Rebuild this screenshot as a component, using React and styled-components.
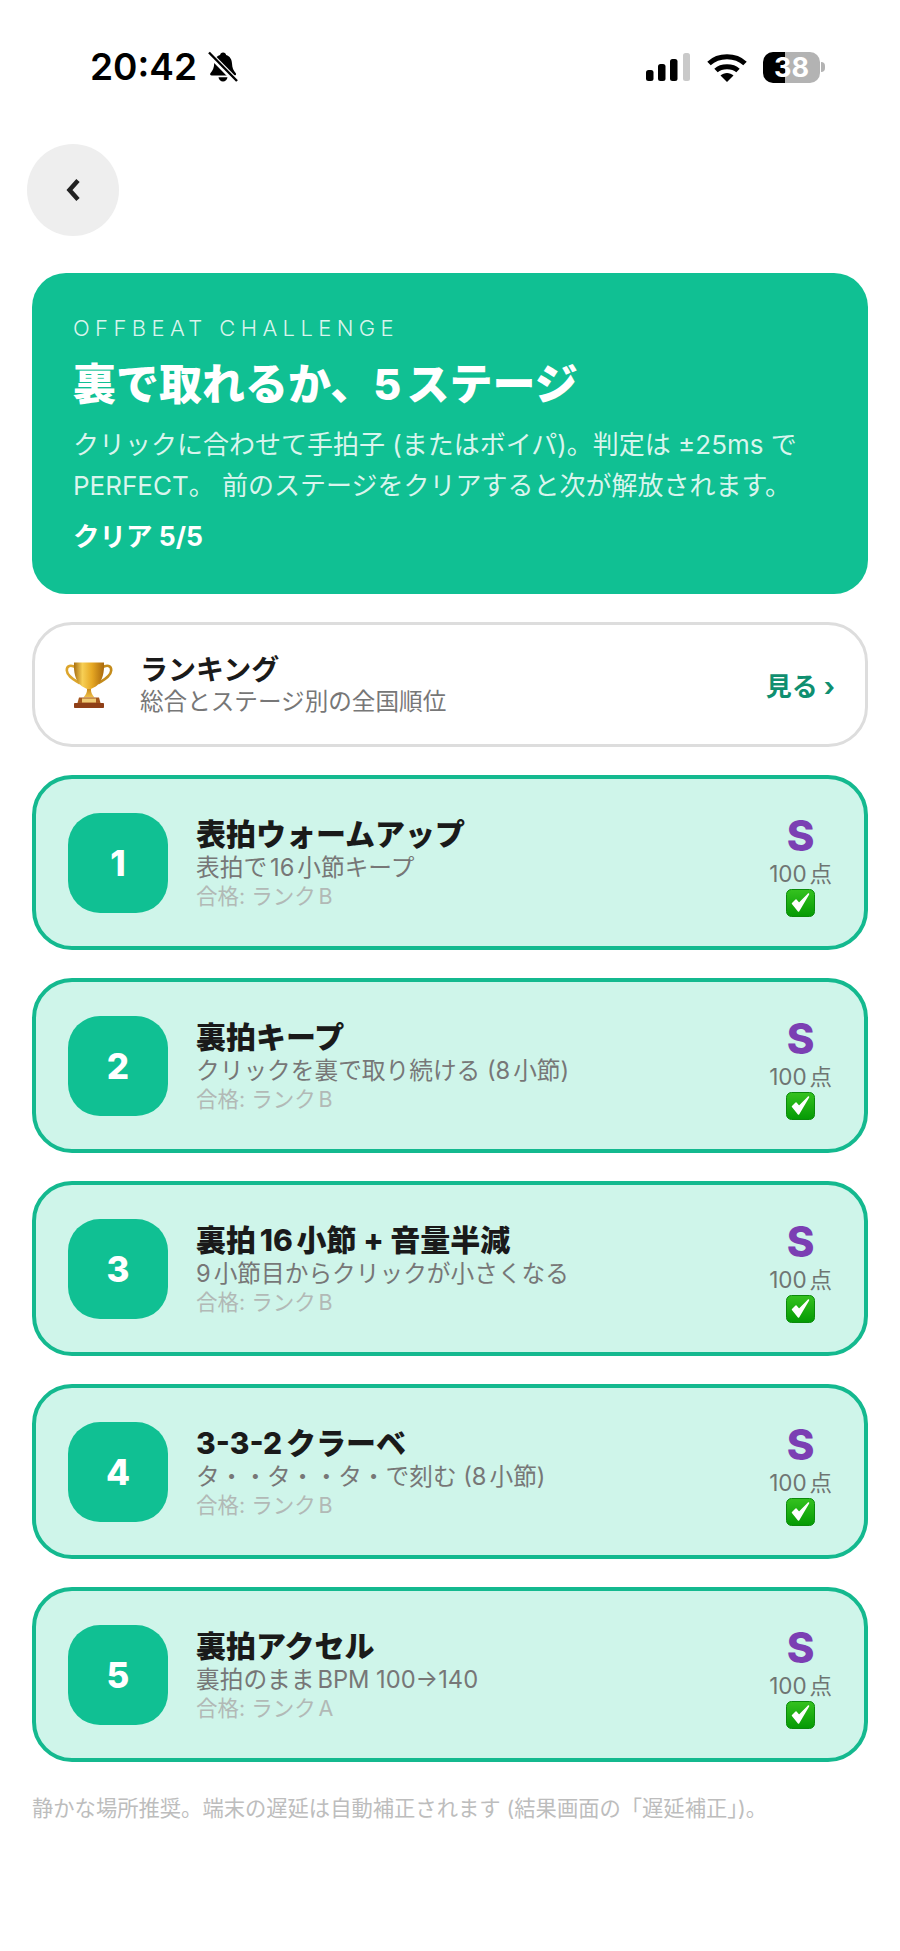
import React from 'react';
import styled, { createGlobalStyle } from 'styled-components';

const GlobalStyle = createGlobalStyle`
    html, body {
        margin: 0;
        padding: 0;
        background: #ffffff;
    }
    body {
        font-family: 'Inter', 'Noto Sans CJK JP', sans-serif;
        text-autospace: normal;
    }
`;

const Page = styled.div`
    width: 900px;
    min-height: 1951px;
    box-sizing: border-box;
    padding: 0 32px;
    display: flex;
    flex-direction: column;
    background: #ffffff;
`;

const StatusBar = styled.div`
    height: 144px;
    margin: 0 -32px;
    padding: 49px 75px 0 90px;
    box-sizing: border-box;
    display: flex;
    justify-content: space-between;
    align-items: flex-start;
`;
const TimeGroup = styled.div`
    display: flex;
    align-items: center;
    gap: 11px;
    height: 36px;
`;
const Time = styled.span`
    font-size: 37px;
    font-weight: 600;
    line-height: 36px;
    color: #000000;
`;
const StatusIcons = styled.div`
    display: flex;
    align-items: center;
    gap: 16.5px;
    height: 36px;
`;
const BatteryWrap = styled.div`
    display: flex;
    align-items: center;
    gap: 1px;
`;
const Battery = styled.div`
    width: 57px;
    height: 31px;
    border-radius: 10px;
    overflow: hidden;
    display: flex;
    align-items: center;
    justify-content: center;
    background: linear-gradient(to right, #000000 0 38%, #b3b3b3 38% 100%);
    color: #ffffff;
    font-size: 27px;
    font-weight: 700;
    line-height: 31px;
`;
const BatteryNub = styled.div`
    width: 4px;
    height: 10px;
    border-radius: 0 4px 4px 0;
    background: #b3b3b3;
`;

const BackButton = styled.button`
    width: 92px;
    height: 92px;
    margin-left: -5px;
    padding: 0;
    border: none;
    border-radius: 50%;
    background: #eeeeee;
    display: flex;
    align-items: center;
    justify-content: center;
`;

const Hero = styled.section`
    margin-top: 37px;
    height: 321px;
    box-sizing: border-box;
    padding: 41px 41px 0;
    border-radius: 34px;
    background: #10c093;
    color: #ffffff;
`;
const Eyebrow = styled.div`
    font-size: 22px;
    font-weight: 300;
    letter-spacing: 5.4px;
    line-height: 28px;
    color: rgba(255, 255, 255, 0.85);
`;
const HeroTitle = styled.h1`
    margin: 14px 0 0;
    font-size: 43px;
    font-weight: 800;
    line-height: 56px;
`;
const HeroText = styled.p`
    margin: 12px 0 0;
    font-size: 26px;
    font-weight: 400;
    line-height: 41px;
    color: rgba(255, 255, 255, 0.85);
`;
const HeroCount = styled.div`
    margin-top: 10px;
    font-size: 26.5px;
    font-weight: 700;
    line-height: 40px;
`;

const RankingCard = styled.a`
    margin-top: 28px;
    height: 125px;
    box-sizing: border-box;
    padding: 0 30px 0 30px;
    border: 3px solid #dddddd;
    border-radius: 40px;
    background: #ffffff;
    display: flex;
    align-items: center;
    gap: 27px;
`;
const RankingBody = styled.div`
    flex: 1;
    display: flex;
    flex-direction: column;
`;
const RankingTitle = styled.div`
    font-size: 28px;
    font-weight: 700;
    line-height: 34px;
    color: #1a1a1a;
`;
const RankingSub = styled.div`
    font-size: 23.6px;
    line-height: 30px;
    color: #777777;
`;
const RankingLink = styled.div`
    font-size: 26px;
    font-weight: 700;
    color: #0f8f70;
`;

const StageList = styled.div`
    margin-top: 28px;
    display: flex;
    flex-direction: column;
    gap: 28px;
`;
const StageCard = styled.article`
    height: 175px;
    box-sizing: border-box;
    padding: 0 32px;
    border: 4px solid #14b98f;
    border-radius: 40px;
    background: #cff5ea;
    display: flex;
    align-items: center;
    gap: 29px;
`;
const StageBadge = styled.div`
    flex: none;
    width: 100px;
    height: 100px;
    border-radius: 32px;
    background: #10c093;
    color: #ffffff;
    font-size: 35px;
    font-weight: 800;
    display: flex;
    align-items: center;
    justify-content: center;
`;
const StageBody = styled.div`
    flex: 1;
    display: flex;
    flex-direction: column;
    margin-left: -1px;
`;
const StageTitle = styled.div`
    font-size: 30px;
    font-weight: 800;
    line-height: 37px;
    color: #1a1a1a;
`;
const StageSub = styled.div`
    font-size: 23.7px;
    line-height: 30px;
    color: #777777;
`;
const StageNeed = styled.div`
    font-size: 21.5px;
    line-height: 27px;
    color: #b2b9b6;
`;
const StageScore = styled.div`
    flex: none;
    display: flex;
    flex-direction: column;
    align-items: center;
`;
const Rank = styled.div`
    font-size: 42px;
    font-weight: 800;
    line-height: 46px;
    margin-top: 4px;
    color: #7b3fb3;
`;
const Points = styled.div`
    font-size: 22.5px;
    line-height: 30px;
    color: #6f7573;
`;

const Footnote = styled.p`
    margin: 31px 0 0;
    font-size: 21.3px;
    line-height: 30px;
    color: #bdbdbd;
    white-space: nowrap;
`;

const BellSlash = () => (
    <svg width="30" height="32" viewBox="0 0 30 32">
        <path
            d="M15 1.5c-1.6 0-2.7 1.1-2.9 2.6C8.3 5.2 6.4 8.6 6.2 12.5c-.2 4.4-1.4 7-3.6 9.4-1 1.1-.4 2.6 1.2 2.6h22.6c1.6 0 2.2-1.5 1.2-2.6-2.2-2.4-3.4-5-3.6-9.4-.2-3.9-2.1-7.3-5.9-8.4-.2-1.5-1.3-2.6-2.9-2.6z"
            fill="#000"
        />
        <path d="M10.5 26.2h9c-.3 2.4-2.2 4.2-4.5 4.2s-4.2-1.8-4.5-4.2z" fill="#000" />
        <path d="M1.5 3 28 30" stroke="#fff" strokeWidth="6" />
        <path d="M1 1.5l28 28.5" stroke="#000" strokeWidth="2.4" />
    </svg>
);

const Signal = () => (
    <svg width="44" height="28" viewBox="0 0 44 28">
        <rect x="0" y="17" width="7.5" height="11" rx="2.5" fill="#000" />
        <rect x="12" y="11" width="7.5" height="17" rx="2.5" fill="#000" />
        <rect x="24" y="6" width="7.5" height="22" rx="2.5" fill="#000" />
        <rect x="37" y="0" width="7" height="28" rx="2.5" fill="#c9c9c9" />
    </svg>
);

const Wifi = () => (
    <svg width="40" height="30" viewBox="0 0 40 30">
        <path d="M2 11.5C11.5 2.5 28.500 2.5 38 11.500" fill="none" stroke="#000" strokeWidth="5" />
        <path d="M9 18.500C14.500 13.500 25.500 13.500 31 18.500" fill="none" stroke="#000" strokeWidth="5" />
        <path d="M13.500 23.500C17 20 23 20 26.500 23.500L20 30z" fill="#000" />
    </svg>
);

const Chevron = () => (
    <svg width="16" height="22" viewBox="0 0 16 22">
        <path d="M13 1.500 4.500 11l8.500 9.500" fill="none" stroke="#222" strokeWidth="4.500" />
    </svg>
);

const Trophy = () => (
    <svg width="48" height="48" viewBox="0 0 48 48" style={{ flex: 'none' }}>
        <defs>
            <linearGradient id="cupGold" x1="0" x2="1" y1="0" y2="0">
                <stop offset="0" stopColor="#a86f12" />
                <stop offset="0.28" stopColor="#f7cf55" />
                <stop offset="0.6" stopColor="#e6a823" />
                <stop offset="1" stopColor="#a9680d" />
            </linearGradient>
            <linearGradient id="standGold" x1="0" x2="0" y1="0" y2="1">
                <stop offset="0" stopColor="#c98a1a" />
                <stop offset="1" stopColor="#f0c24c" />
            </linearGradient>
        </defs>
        <path d="M11 6.500C6 3.500 1.500 4.500 1.800 9.500c.3 6 8 9.500 13.200 13" fill="none" stroke="#dca52c" strokeWidth="2.600" />
        <path d="M37 6.500c5-3 9.500-2 9.200 3-.3 6-8 9.500-13.200 13" fill="none" stroke="#c48c1c" strokeWidth="2.600" />
        <path d="M9 1.500h30c.5 10-1.500 18-6.500 22.500-3 2.700-6 3-6.800 4.500h-3.400c-.8-1.500-3.800-1.800-6.800-4.500C10.500 19.500 8.500 11.500 9 1.500z" fill="url(#cupGold)" />
        <path d="M22 28h4c-.2 3 .8 5.500 3.500 8.500h-11C21.200 33.500 22.200 31 22 28z" fill="url(#standGold)" />
        <path d="M14 36.500h20l1.500 5.500h-23z" fill="#a5561c" />
        <rect x="9" y="42" width="30" height="5" rx="0.8" fill="#8f3f17" />
        <rect x="17" y="37.500" width="14" height="4" fill="#efcb74" />
    </svg>
);

const CheckMark = () => (
    <svg width="29" height="28" viewBox="0 0 29 28">
        <defs>
            <linearGradient id="checkGreen" x1="0" x2="0" y1="0" y2="1">
                <stop offset="0" stopColor="#35c21f" />
                <stop offset="1" stopColor="#049a04" />
            </linearGradient>
        </defs>
        <rect x="0.500" y="0.500" width="28" height="27" rx="5" fill="url(#checkGreen)" stroke="#0b8a0b" />
        <path d="M6.500 14.500l6 7.500 10-17-9.500 9.500-3-3.500z" fill="#fff" stroke="#fff" strokeWidth="1.500" strokeLinejoin="round" />
    </svg>
);

const stages = [
    { no: 1, title: '表拍ウォームアップ', sub: '表拍で16小節キープ', need: 'B' },
    { no: 2, title: '裏拍キープ', sub: 'クリックを裏で取り続ける (8小節)', need: 'B' },
    { no: 3, title: '裏拍16小節 + 音量半減', sub: '9小節目からクリックが小さくなる', need: 'B' },
    { no: 4, title: '3-3-2クラーベ', sub: 'タ・・タ・・タ・で刻む (8小節)', need: 'B' },
    { no: 5, title: '裏拍アクセル', sub: '裏拍のままBPM 100→140', need: 'A' },
];

function App() {
    return (
        <Page>
            <GlobalStyle />
            <StatusBar>
                <TimeGroup>
                    <Time>20:42</Time>
                    <BellSlash />
                </TimeGroup>
                <StatusIcons>
                    <Signal />
                    <Wifi />
                    <BatteryWrap>
                        <Battery>38</Battery>
                        <BatteryNub />
                    </BatteryWrap>
                </StatusIcons>
            </StatusBar>
            <BackButton aria-label="戻る">
                <Chevron />
            </BackButton>
            <Hero>
                <Eyebrow>OFFBEAT CHALLENGE</Eyebrow>
                <HeroTitle>裏で取れるか、5ステージ</HeroTitle>
                <HeroText>
                    クリックに合わせて手拍子 (またはボイパ)。判定は ±25ms で PERFECT。 前のステージをクリアすると次が解放されます。
                </HeroText>
                <HeroCount>クリア 5/5</HeroCount>
            </Hero>
            <RankingCard>
                <Trophy />
                <RankingBody>
                    <RankingTitle>ランキング</RankingTitle>
                    <RankingSub>総合とステージ別の全国順位</RankingSub>
                </RankingBody>
                <RankingLink>見る ›</RankingLink>
            </RankingCard>
            <StageList>
                {stages.map((s) => (
                    <StageCard key={s.no}>
                        <StageBadge>{s.no}</StageBadge>
                        <StageBody>
                            <StageTitle>{s.title}</StageTitle>
                            <StageSub>{s.sub}</StageSub>
                            <StageNeed>合格: ランク{s.need}</StageNeed>
                        </StageBody>
                        <StageScore>
                            <Rank>S</Rank>
                            <Points>100点</Points>
                            <CheckMark />
                        </StageScore>
                    </StageCard>
                ))}
            </StageList>
            <Footnote>静かな場所推奨。端末の遅延は自動補正されます (結果画面の「遅延補正」)。</Footnote>
        </Page>
    );
}

export default App;
